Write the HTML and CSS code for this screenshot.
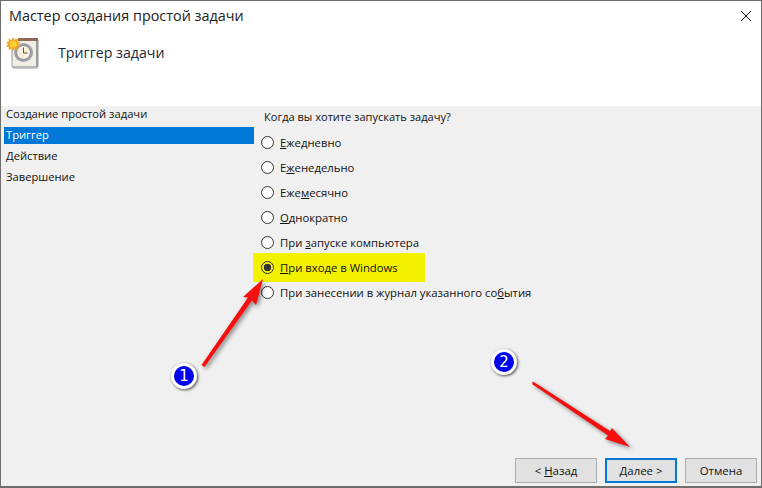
FILE: index.html
```html
<!DOCTYPE html>
<html lang="ru">
<head>
    <meta charset="UTF-8">
    <title>Мастер создания простой задачи</title>
    <link rel="stylesheet" href="styles.css">
</head>
<body>
    <div class="window">
        <div class="header">
            <div class="titlebar">
                <span class="title">Мастер создания простой задачи</span>
                <svg class="close" width="12" height="12" viewBox="0 0 12 12"><path d="M1 1L11 11M11 1L1 11" stroke="#111" stroke-width="1" fill="none"/></svg>
            </div>
            <div class="subtitle">
                <svg class="task-icon" width="34" height="34" viewBox="0 0 34 34">
                    <path d="M6 3H32V29L31 31H7L6 29Z" fill="#f1eee6" stroke="#9a9a9a"/>
                    <rect x="7" y="29" width="25" height="2" fill="#b9b9b9"/>
                    <rect x="12" y="1" width="20" height="3" fill="#8e6a55"/>
                    <rect x="30" y="4" width="2" height="26" fill="#9a9a9a"/>
                    <circle cx="17.500" cy="15.500" r="9.500" fill="#a3a3a3"/>
                    <circle cx="17.500" cy="15.500" r="7" fill="#f6efd9" stroke="#7d8b99"/>
                    <path d="M17.500 10.500V16H21.500" stroke="#555" stroke-width="1" fill="none"/>
                    <path d="M7 0L8.500 3L11.500 1.500L11 4.500L14.500 5L12 7.200L14.500 9.500L11 10L11.500 13L8.500 11.500L7 14L5.500 11.500L2.500 13L3 10L0 9.500L2 7.200L0 5L3 4.500L2.500 1.500L5.500 3Z" fill="#f5a21e"/>
                    <circle cx="7.200" cy="7" r="3.600" fill="#fbcf35"/>
                </svg>
                <span class="subtitle-text">Триггер задачи</span>
            </div>
        </div>

        <div class="body">
            <div class="sidebar">
                <div class="step">Создание простой задачи</div>
                <div class="step selected">Триггер</div>
                <div class="step">Действие</div>
                <div class="step">Завершение</div>
            </div>
            <div class="content">
                <div class="question">Когда вы хотите запускать задачу?</div>
                <div class="options">
                    <div class="option"><span class="radio"></span><span><u>Е</u>жедневно</span></div>
                    <div class="option"><span class="radio"></span><span>Е<u>ж</u>енедельно</span></div>
                    <div class="option"><span class="radio"></span><span>Еже<u>м</u>есячно</span></div>
                    <div class="option"><span class="radio"></span><span><u>О</u>днократно</span></div>
                    <div class="option"><span class="radio"></span><span>При <u>з</u>апуске компьютера</span></div>
                    <div class="option highlight"><span class="radio checked"></span><span><u>П</u>ри входе в Windows</span></div>
                    <div class="option"><span class="radio"></span><span>При занесении в журнал указанного со<u>б</u>ытия</span></div>
                </div>
            </div>
        </div>

        <div class="footer">
            <button class="btn btn-back">&lt; <u>Н</u>азад</button>
            <button class="btn btn-next"><u>Д</u>алее &gt;</button>
            <button class="btn">Отмена</button>
        </div>

        <!-- annotations drawn on top of the screenshot -->
        <svg class="arrows" width="762" height="488" viewBox="0 0 762 488">
            <path d="M201.500 365L248 297.500L243 297L263 279L256 305L252 300.500L204.500 367Z" fill="#f50f0f"/>
            <path d="M533 381.500L610 431L612 428L630 447L605 439L608 435.500L532 384Z" fill="#f50f0f"/>
        </svg>
        <div class="badge badge-one">1</div>
        <div class="badge badge-two">2</div>
    </div>
</body>
</html>
```

FILE: styles.css
```css
html, body {
    margin: 0;
    padding: 0;
}
body {
    font-family: "Open Sans", "Noto Sans", Arial, sans-serif;
    font-size: 11.2px;
    color: #111;
}
.window {
    position: relative;
    display: flex;
    flex-direction: column;
    box-sizing: border-box;
    width: 762px;
    height: 488px;
    background-color: #f0f0f0;
    border: 1px solid #6e6e6e;
    border-bottom-width: 2px;
    overflow: hidden;
}
.header {
    height: 105px;
    background-color: white;
}
.titlebar {
    display: flex;
    justify-content: space-between;
    align-items: center;
    height: 30px;
    padding: 0 4px 0 8px;
}
.title {
    margin-top: -2px;
    font-size: 14.4px;
    color: #222;
}
.close {
    margin-right: 5px;
    margin-top: -1px;
}
.subtitle {
    display: flex;
    align-items: center;
    height: 46px;
    padding-left: 5px;
}
.task-icon {
    flex: none;
}
.subtitle-text {
    margin: -3px 0 0 18px;
    font-size: 14.2px;
    color: #1a2a3a;
}
.body {
    display: flex;
    flex: 1;
}
.sidebar {
    width: 253px;
}
.step {
    height: 17px;
    line-height: 16px;
    margin: 0 0 4px 3px;
    padding-left: 2px;
}
.step.selected {
    background-color: #0078d7;
    color: white;
}
.content {
    flex: 1;
}
.question {
    height: 24px;
    padding-left: 10px;
    line-height: 22px;
    font-size: 11.05px;
}
.options {
    display: flex;
    flex-direction: column;
    font-size: 11.3px;
}
.option {
    display: flex;
    align-items: center;
    gap: 6px;
    height: 25px;
    padding-left: 7px;
}
.highlight {
    width: 172px;
    height: 29px;
    margin: -2px 0 -2px -1px;
    padding-left: 8px;
    box-sizing: border-box;
    background-color: #f2f200;
}
.radio {
    flex: none;
    box-sizing: border-box;
    width: 13px;
    height: 13px;
    background-color: white;
    border: 1px solid #333;
    border-radius: 50%;
}
.radio.checked {
    background-color: #f2f200;
    background-image: radial-gradient(circle, #333 0, #333 3.5px, transparent 4px);
}
.footer {
    display: flex;
    justify-content: flex-end;
    gap: 8px;
    padding: 0 4px 3px 0;
}
.btn {
    box-sizing: border-box;
    width: 72px;
    height: 25px;
    padding: 0;
    font-family: inherit;
    font-size: 11.4px;
    color: #111;
    background-color: #e1e1e1;
    border: 1px solid #adadad;
}
.btn-back {
    width: 82px;
}
.btn-next {
    border: 2px solid #0078d7;
}
.arrows {
    position: absolute;
    top: -1px;
    left: -1px;
    filter: drop-shadow(2px 2px 2px rgba(0, 0, 0, 0.45));
}
.badge {
    position: absolute;
    box-sizing: border-box;
    width: 26px;
    height: 26px;
    line-height: 20px;
    text-align: center;
    font-family: "DejaVu Sans", sans-serif;
    font-size: 15px;
    color: white;
    background-color: #0000f0;
    border: 3px solid white;
    border-radius: 50%;
    box-shadow: 1px 1px 3px rgba(0, 0, 0, 0.7);
}
.badge-one {
    left: 170px;
    top: 362px;
}
.badge-two {
    left: 490px;
    top: 348px;
}
```
